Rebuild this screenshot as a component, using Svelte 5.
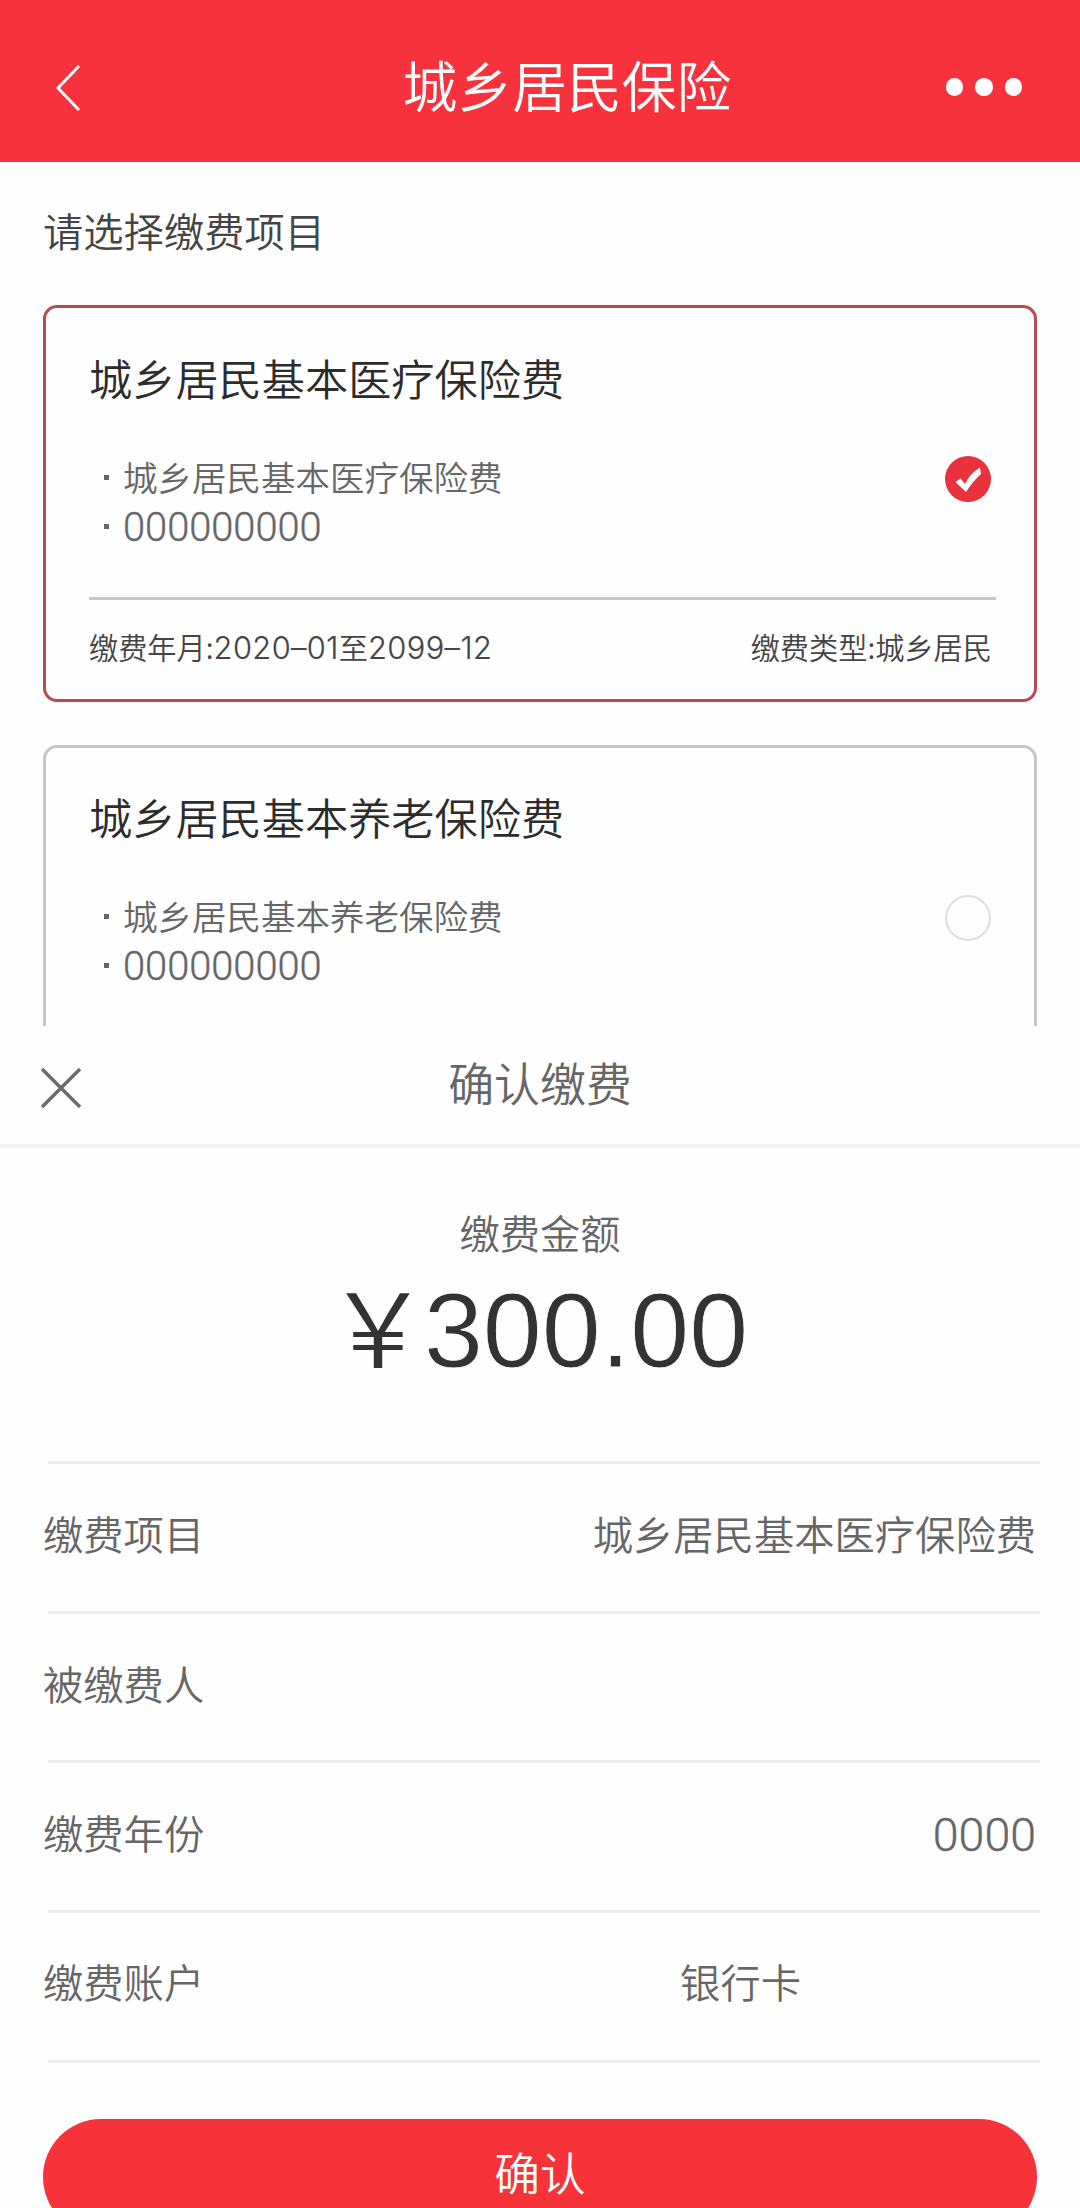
<script>
  const projects = [
    { name: '城乡居民基本医疗保险费', code: '000000000', selected: true },
    { name: '城乡居民基本养老保险费', code: '000000000', selected: false }
  ];
</script>

<div class="screen">
  <header class="topbar">
    <svg class="back" viewBox="0 0 28 50" aria-label="返回"><path d="M25 3 4 25 25 47" /></svg>
    <h1>城乡居民保险</h1>
    <div class="dots"><i></i><i></i><i></i></div>
  </header>

  <main class="chooser">
    <h2>请选择缴费项目</h2>
    {#each projects as p}
      <section class="card" class:selected={p.selected}>
        <h3>{p.name}</h3>
        <div class="body">
          <ul>
            <li><span>{p.name}</span></li>
            <li class="code"><span>{p.code}</span></li>
          </ul>
          {#if p.selected}
            <svg class="radio" viewBox="0 0 46 46">
              <circle cx="23" cy="23" r="23" />
              <path d="M10.5 26 15.5 22.5 20 28 Q25 17.5 35 11.5 L36 18 Q28 25 21 36 Z" />
            </svg>
          {:else}
            <span class="radio empty"></span>
          {/if}
        </div>
        {#if p.selected}
          <footer>
            <span>缴费年月:<b>2020–01</b>至<b>2099–12</b></span>
            <span>缴费类型:城乡居民</span>
          </footer>
        {/if}
      </section>
    {/each}
  </main>

  <section class="sheet">
    <div class="sheet-head">
      <svg class="close" viewBox="0 0 42 42" aria-label="关闭"><path d="M2 2 40 40M40 2 2 40" /></svg>
      <h2>确认缴费</h2>
    </div>
    <div class="amount">
      <p>缴费金额</p>
      <strong><span class="yen">￥</span><span class="figure">300.00</span></strong>
    </div>
    <dl>
      <div><dt>缴费项目</dt><dd>城乡居民基本医疗保险费</dd></div>
      <div><dt>被缴费人</dt><dd></dd></div>
      <div><dt>缴费年份</dt><dd class="num">0000</dd></div>
      <div><dt>缴费账户</dt><dd class="bank">银行卡</dd></div>
    </dl>
    <button>确认</button>
  </section>
</div>

<style>
  :global(body) { margin: 0; background: #fefefe; }
  .screen {
    width: 1080px;
    height: 2208px;
    overflow: hidden;
    background: #fefefe;
    color: #666;
    font-family: 'Noto Sans CJK SC', sans-serif;
    font-weight: 350;
    display: flex;
    flex-direction: column;
  }
  h1, h2, h3, p, ul, dl, dd { margin: 0; padding: 0; font-weight: inherit; }
  .topbar {
    flex: none;
    box-sizing: border-box;
    height: 162px;
    padding: 14px 58px 0 54px;
    background: #f8323c;
    color: #fff;
    display: grid;
    grid-template-columns: 80px 1fr 80px;
    align-items: center;
  }
  .back { width: 28px; height: 50px; fill: none; stroke: #fff; stroke-width: 3; }
  h1 { font-size: 54.8px; line-height: 60px; padding-bottom: 10px; text-align: center; margin-left: 104px; margin-right: 46px; white-space: nowrap; }
  .dots { display: flex; gap: 12px; justify-content: flex-end; margin-top: -2px; }
  .dots i { flex: none; width: 17.5px; height: 17.5px; border-radius: 50%; background: #fff; }
  .chooser { flex: none; box-sizing: border-box; height: 864px; padding: 0 43px; overflow: hidden; }
  .chooser h2 { font-size: 40.3px; line-height: 60px; padding: 38px 0 45px; color: #444; }
  .card {
    box-sizing: border-box;
    height: 397px;
    border: 3px solid #c6c6c6;
    border-radius: 14px;
    padding: 38px 38px 0 43px;
    margin-bottom: 43px;
  }
  .card.selected { border-color: #b84a52; padding-top: 39px; }
  h3 { font-size: 43.2px; line-height: 60px; color: #2c2c2c; }
  .body { display: flex; justify-content: space-between; padding: 46px 5px 0 15px; }
  ul { list-style: none; font-size: 34.5px; }
  li { display: flex; align-items: center; gap: 14px; height: 49px; line-height: 49px; }
  li::before { content: ''; width: 5px; height: 5px; background: #666; }
  li span { margin-top: -2px; }
  .code { font-family: Roboto, sans-serif; font-weight: 300; font-size: 39.8px; -webkit-text-stroke: 0.4px #666; }
  .code span { margin-top: 1px; }
  .radio { width: 46px; height: 46px; margin-top: 3px; }
  .radio circle { fill: #e8323c; }
  .radio path { fill: #fff; }
  .empty { box-sizing: border-box; border: 2px solid #dedede; border-radius: 50%; }
  .card footer {
    margin-top: 46px;
    border-top: 3px solid #c6c6c6;
    padding: 21px 4px 0 0;
    display: flex;
    justify-content: space-between;
    font-size: 29.2px;
    line-height: 50px;
    color: #444;
  }
  b { font: 300 30.8px/1 Inter, sans-serif; letter-spacing: 0.4px; -webkit-text-stroke: 0.2px #444; }
  .sheet { flex: none; }
  .sheet-head {
    box-sizing: border-box;
    height: 122px;
    border-bottom: 4px solid #f2f2f2;
    padding: 0 40px;
    display: grid;
    grid-template-columns: 42px 1fr 42px;
  }
  .close { width: 42px; height: 42px; margin-top: 41px; fill: none; stroke: #6a6a6a; stroke-width: 3.4; }
  .sheet-head h2 { font-size: 45.9px; line-height: 60px; padding-top: 25px; text-align: center; }
  .amount { height: 313px; display: flex; flex-direction: column; align-items: center; }
  .amount p { font-size: 40.3px; line-height: 60px; padding-top: 54px; }
  .amount strong { font: 106px/120px 'Liberation Sans', sans-serif; color: #333; display: flex; margin-top: 8px; }
  .figure { -webkit-text-stroke: 0.8px #fefefe; }
  .yen { font-family: 'Noto Sans CJK SC', sans-serif; font-size: 103px; font-weight: 350; margin: -6px -5.5px 0; }
  dl { padding: 0 40px 0 48px; border: 0; }
  dl div {
    box-sizing: border-box;
    height: 149.5px;
    border-top: 3px solid #ececec;
    display: flex;
    justify-content: space-between;
    font-size: 40.3px;
    line-height: 60px;
    padding-top: 39px;
  }
  dl div:last-child { height: 153px; border-bottom: 3px solid #ececec; padding-top: 38px; }
  dt { margin-left: -5px; }
  dd { margin-right: 4px; }
  .num { font-family: Roboto, sans-serif; font-weight: 300; font-size: 46.5px; padding-top: 3px; -webkit-text-stroke: 0.4px #666; }
  .bank { margin-right: 239px; }
  button {
    display: block;
    width: 994px;
    height: 116px;
    margin: 56px 43px 0;
    padding: 0 0 11px;
    border: 0;
    border-radius: 58px;
    background: #f83239;
    color: #fff;
    font: 350 45.7px/105px 'Noto Sans CJK SC', sans-serif;
  }
</style>
